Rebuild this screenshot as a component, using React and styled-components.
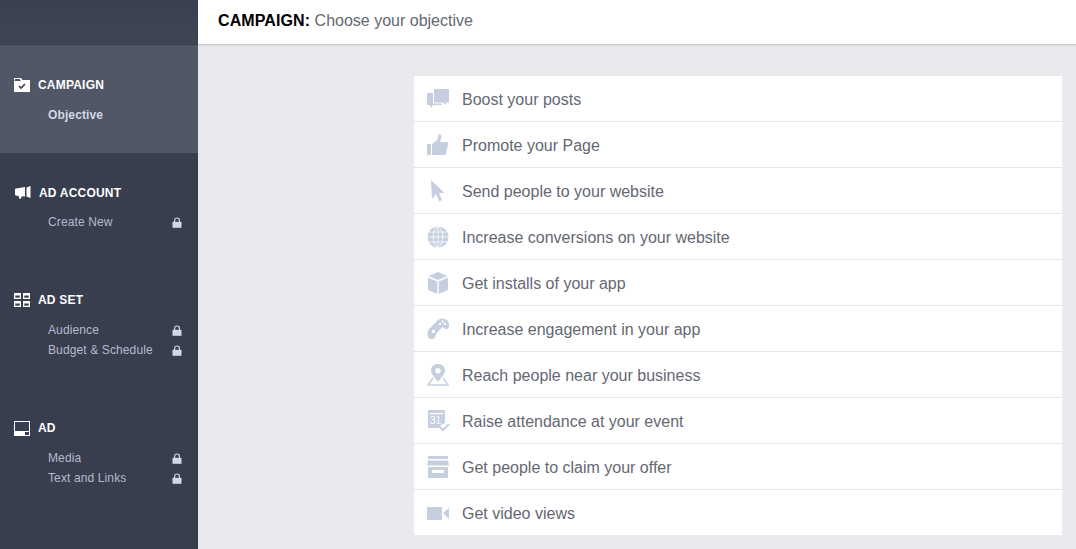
import React from "react";
import styled, { createGlobalStyle } from "styled-components";

const GlobalStyle = createGlobalStyle`
  html, body {
    margin: 0;
    padding: 0;
    height: 100%;
    overflow: hidden;
    font-family: "Liberation Sans", Arial, sans-serif;
    background: #e9eaed;
  }
`;

// sidebar icons
const FolderCheck = () => (
  <svg width="16" height="14" viewBox="0 0 16 14">
    <path fill="#fff" d="M0 0h7l1.500 2H6.500L5.500 1H1v1.500H0zM0 3h6l1-1h9v12H0z" />
    <path fill="none" stroke="#3d4150" strokeWidth="1.600" d="M5 8l2 2 4-4" />
  </svg>
);
const Megaphone = () => (
  <svg width="16" height="14" viewBox="0 0 16 14">
    <path fill="#fff" d="M0 3.500C0 2.800.5 2.500 1.200 2.500L10 1v9.500L7 10.200 5.500 13H4.500L3.500 9.800H1.500C.6 9.800 0 9.200 0 8.300z" />
    <path fill="#fff" d="M11.500 1.500L15.500 0v12l-4-1.500z" />
  </svg>
);
const Blocks = () => (
  <svg width="16" height="14" viewBox="0 0 16 14" fill="none" stroke="#fff" strokeWidth="1.300">
    <path fill="#fff" stroke="none" d="M0 0h7v2.500H0zM9 0h7v2.500H9zM0 8h7v2.500H0zM9 8h7v2.500H9z" />
    <rect x=".65" y=".65" width="5.700" height="4.700" />
    <rect x="9.650" y=".65" width="5.700" height="4.700" />
    <rect x=".65" y="8.650" width="5.700" height="4.700" />
    <rect x="9.650" y="8.650" width="5.700" height="4.700" />
  </svg>
);
const Screen = () => (
  <svg width="16" height="15" viewBox="0 0 16 15">
    <path fill="#fff" fillRule="evenodd" d="M0 0h16v15H0zM1 1v9h14V1zM11 11v3h4v-3z" />
  </svg>
);
const Lock = () => (
  <svg width="10" height="11" viewBox="0 0 10 11">
    <path fill="none" stroke="#d3d8e4" strokeWidth="1.200" d="M2.600 5V3.200C2.600 1.800 3.600 1 5 1s2.400.8 2.400 2.200V5" />
    <rect x=".5" y="4.800" width="9" height="6" fill="#d3d8e4" />
  </svg>
);

// objective icons, all in the same pale blue
const Glyph = ({ children }) => (
  <svg width="24" height="24" viewBox="0 0 24 24" fill="#c5cfe0">
    {children}
  </svg>
);
const Chat = () => (
  <Glyph>
    <path d="M8 2h15v13.500h-2.500L19 18l-1.500-2.500H8z" />
    <path d="M1 6h6v10.500h9V18H7l-2 3-1-3H1z" />
  </Glyph>
);
const Thumb = () => (
  <Glyph>
    <rect x="1" y="11" width="4" height="11" />
    <path d="M6 11l5-4 2-6c2 0 2.800 1.500 2.300 3.500L14 9h7c1.500 0 1.500 1.500 1 2.500l-2 9c-.3 1-1 1.500-2 1.500H6z" />
  </Glyph>
);
const Cursor = () => (
  <Glyph>
    <path d="M5 1l13.500 13H13l3 7-3 1.500-2.800-7.500L6 20z" />
  </Glyph>
);
const Globe = () => (
  <Glyph>
    <circle cx="12" cy="12" r="10.500" />
    <g fill="none" stroke="#fff" strokeWidth="0.800">
      <ellipse cx="12" cy="12" rx="4.800" ry="10" />
      <path d="M12 1.500v21M2 12h20M3 7h18M3 17h18" />
    </g>
  </Glyph>
);
const Cube = () => (
  <Glyph>
    <path d="M12 1l9.500 4L12 9 2.500 5z" />
    <path d="M2 6.500l9.300 4V23L2 19zM22 6.500l-9.300 4V23l9.300-4z" />
  </Glyph>
);
const Gamepad = () => (
  <Glyph>
    <path d="M10.500 4.500C12.500 1.500 17 .5 20 2.500s4 5.500 2.500 8.500c-1 1.500-2.500 1.500-4 .5l-2-1.500-6 6.500-1.500 4c-1.500 2-5 2-6.500 0S1 15 3 12z" />
    <g fill="#fff">
      <rect x="15.500" y="3.500" width="2" height="2" />
      <rect x="13" y="6" width="2" height="2" />
      <rect x="18" y="6" width="2" height="2" />
      <rect x="6" y="13" width="3" height="3" />
    </g>
  </Glyph>
);
const Pin = () => (
  <Glyph>
    <path fillRule="evenodd" d="M12 1c4 0 7 2.800 7 6.500 0 3-3.500 7.500-7 11-3.500-3.500-7-8-7-11C5 3.800 8 1 12 1zm0 4a2.800 2.800 0 100 5.600A2.800 2.800 0 0012 5z" />
    <path fill="none" stroke="#c5cfe0" strokeWidth="1.400" d="M7 15l-5 7h20l-5-7" />
  </Glyph>
);
const Calendar = () => (
  <Glyph>
    <path d="M2 1h17v13l-4 2-1.500 3H2z" />
    <rect x="3.500" y="4" width="14" height="1.200" fill="#fff" />
    <text x="4" y="15" fontSize="10" fontFamily="Liberation Sans" fill="#fff">31</text>
    <path fill="none" stroke="#c5cfe0" strokeWidth="2" d="M14 18l3 3 6-6" />
  </Glyph>
);
const Store = () => (
  <Glyph>
    <rect x="2" y="1" width="20" height="3" />
    <path d="M2 5.500h20l1 5H1z" />
    <path d="M2 12h20v11H2z" />
    <rect x="6" y="15" width="12" height="3" fill="#fff" />
  </Glyph>
);
const Video = () => (
  <Glyph>
    <rect x="1" y="6" width="15" height="13" />
    <path d="M17 12l6-5v11z" />
  </Glyph>
);

const nav = [
  { title: "CAMPAIGN", icon: <FolderCheck />, active: true, items: [{ label: "Objective", current: true }] },
  { title: "AD ACCOUNT", icon: <Megaphone />, nudge: true, tight: true, items: [{ label: "Create New", locked: true }] },
  {
    title: "AD SET",
    icon: <Blocks />,
    items: [
      { label: "Audience", locked: true },
      { label: "Budget & Schedule", locked: true },
    ],
  },
  {
    title: "AD",
    icon: <Screen />,
    items: [
      { label: "Media", locked: true },
      { label: "Text and Links", locked: true },
    ],
  },
];

const objectives = [
  { label: "Boost your posts", icon: <Chat /> },
  { label: "Promote your Page", icon: <Thumb /> },
  { label: "Send people to your website", icon: <Cursor /> },
  { label: "Increase conversions on your website", icon: <Globe /> },
  { label: "Get installs of your app", icon: <Cube /> },
  { label: "Increase engagement in your app", icon: <Gamepad /> },
  { label: "Reach people near your business", icon: <Pin /> },
  { label: "Raise attendance at your event", icon: <Calendar /> },
  { label: "Get people to claim your offer", icon: <Store /> },
  { label: "Get video views", icon: <Video /> },
];

const App = () => (
  <>
    <GlobalStyle />
    <Page>
      <Sidebar>
        <SideTop />
        {nav.map((s) => (
          <Section key={s.title} $active={s.active}>
            <SectionTitle>
              <SectionIcon $nudge={s.nudge}>{s.icon}</SectionIcon>
              {s.title}
            </SectionTitle>
            <SubList $tight={s.tight}>
              {s.items.map((item) => (
                <SubItem key={item.label} $current={item.current}>
                  {item.label}
                  {item.locked && <Lock />}
                </SubItem>
              ))}
            </SubList>
          </Section>
        ))}
      </Sidebar>
      <Main>
        <Header>
          <strong>CAMPAIGN:</strong> Choose your objective
        </Header>
        <Content>
          <List>
            {objectives.map((o) => (
              <Row key={o.label}>
                <RowIcon>{o.icon}</RowIcon>
                <RowLabel>{o.label}</RowLabel>
              </Row>
            ))}
          </List>
        </Content>
      </Main>
    </Page>
  </>
);

export default App;

const Page = styled.div`
  display: flex;
  height: 100vh;
`;

const Sidebar = styled.div`
  width: 198px;
  flex-shrink: 0;
  background: #383e4d;
`;

const SideTop = styled.div`
  height: 44px;
  background: linear-gradient(#3a404f, #3f4553);
  border-bottom: 1px solid #3a3f4e;
`;

const Section = styled.div`
  padding: 30px 16px 28px 14px;
  height: ${(p) => (p.$active ? "108px" : "auto")};
  box-sizing: border-box;
  background: ${(p) => (p.$active ? "#515766" : "transparent")};
`;

const SectionTitle = styled.div`
  display: flex;
  align-items: center;
  height: 20px;
  font-size: 12px;
  font-weight: bold;
  letter-spacing: 0.2px;
  color: #fff;
`;

const SectionIcon = styled.span`
  display: flex;
  box-sizing: border-box;
  width: ${(p) => (p.$nudge ? "25px" : "24px")};
  padding-left: ${(p) => (p.$nudge ? "1px" : "0")};
  flex-shrink: 0;
`;

const SubList = styled.div`
  margin-top: ${(p) => (p.$tight ? "9px" : "10px")};
  padding-left: 34px;
`;

const SubItem = styled.div`
  display: flex;
  align-items: center;
  justify-content: space-between;
  height: 20px;
  font-size: 12px;
  letter-spacing: 0.12px;
  font-weight: ${(p) => (p.$current ? "bold" : "normal")};
  color: ${(p) => (p.$current ? "#d3d8e4" : "#b4bbcd")};
`;

const Main = styled.div`
  flex: 1;
  display: flex;
  flex-direction: column;
  min-width: 0;
`;

const Header = styled.div`
  height: 44px;
  padding-left: 20px;
  line-height: 41px;
  font-size: 16px;
  color: #646873;
  background: #fff;
  border-bottom: 1px solid #c9cacc;
  box-shadow: 0 1px 1px rgba(0, 0, 0, 0.06);

  strong {
    color: #000;
    letter-spacing: 0.1px;
  }
`;

const Content = styled.div`
  flex: 1;
  padding: 31px 14px 0 216px;
`;

const List = styled.div`
  background: #fff;
`;

const Row = styled.div`
  display: flex;
  align-items: center;
  height: 45px;
  padding-left: 12px;
  font-size: 16px;
  color: #646873;
  border-bottom: 1px solid #e5e6e9;

  &:last-child {
    border-bottom: 0;
  }
`;

const RowIcon = styled.span`
  display: flex;
  width: 36px;
  flex-shrink: 0;
`;

const RowLabel = styled.span`
  padding-top: 2px;
`;
